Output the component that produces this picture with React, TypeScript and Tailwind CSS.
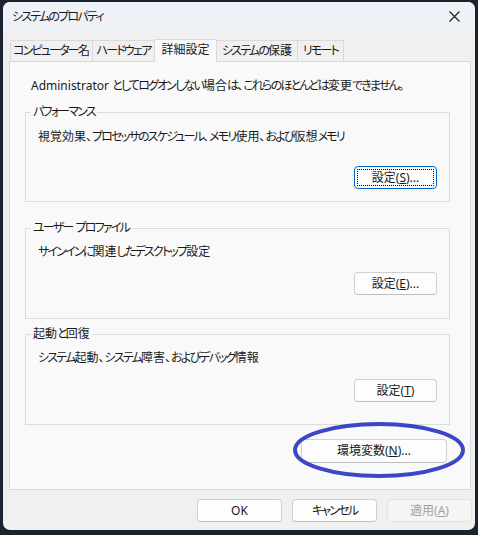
import type { ReactNode } from 'react'

const FONT = "font-['Noto_Sans','Noto_Sans_CJK_JP',sans-serif] [font-feature-settings:'palt']"

// kana runs are set tighter than kanji, like the system UI face
function Jp({ children }: { children: string }) {
  return (
    <>
      {children.split(/([\u3040-\u30ff]+)/).map((s, i) =>
        i % 2 ? (
          <span key={i} className="tracking-[-1.8px]">
            {s}
          </span>
        ) : (
          s
        ),
      )}
    </>
  )
}

export default function App() {
  return (
    <div className={`h-[535px] w-[478px] overflow-hidden bg-[#1c2330] pl-[3px] pt-[2px] text-[12px] leading-[16px] text-[#1a1a1a] ${FONT}`}>
      <div className="flex h-[528px] w-[472px] flex-col overflow-hidden rounded-[7px] bg-[#f0f0f0]">
        {/* title bar */}
        <div className="flex h-[29px] shrink-0 items-center justify-between bg-[#eef2f7] pl-[9px] pr-[6px]">
          <span>
            <Jp>システムのプロパティ</Jp>
          </span>
          <span className="grid h-[29px] w-[30px] place-items-center">
            <svg width="11" height="11" viewBox="0 0 11 11" stroke="#1a1a1a" strokeWidth="1.1">
              <path d="M0.5 0.5l10 10M10.5 0.5l-10 10" />
            </svg>
          </span>
        </div>

        {/* tabs */}
        <div className="ml-[7px] mt-[8px] flex h-[22px] items-end">
          <Tab w="w-[83px]">コンピューター名</Tab>
          <Tab w="w-[63px]">ハードウェア</Tab>
          <Tab w="w-[63px]" active>
            詳細設定
          </Tab>
          <Tab w="w-[82px]">システムの保護</Tab>
          <Tab w="w-[47px]">リモート</Tab>
        </div>

        <div className="ml-[6px] h-[429px] w-[462px] border border-[#d9d9d9] bg-[#f9f9f9] pt-[16px]">
          <p className="ml-[21px]">
            <Jp>Administrator としてログオンしない場合は、これらのほとんどは変更できません。</Jp>
          </p>

          <Group title="パフォーマンス" className="mt-[10px] h-[98px]">
            <p className="ml-[7px] mt-[9px]">
              <Jp>視覚効果、プロセッサのスケジュール、メモリ使用、および仮想メモリ</Jp>
            </p>
            <div className="mt-[21px] flex justify-end">
              <Btn focused>
                設定(<u>S</u>)...
              </Btn>
            </div>
          </Group>

          <Group title="ユーザー プロファイル" className="mt-[18px] h-[99px]">
            <p className="ml-[7px] mt-[8px]">
              <Jp>サインインに関連したデスクトップ設定</Jp>
            </p>
            <div className="mt-[12px] flex justify-end">
              <Btn>
                設定(<u>E</u>)...
              </Btn>
            </div>
          </Group>

          <Group title="起動と回復" className="mt-[7px] h-[99px]">
            <p className="ml-[7px] mt-[8px]">
              <Jp>システム起動、システム障害、およびデバッグ情報</Jp>
            </p>
            <div className="mt-[13px] flex justify-end">
              <Btn>
                設定(<u>T</u>)
              </Btn>
            </div>
          </Group>

          <div className="mr-[23px] mt-[14px] flex justify-end">
            <div className="relative">
              <Btn wide>
                環境変数(<u>N</u>)...
              </Btn>
              <svg className="pointer-events-none absolute left-[-9px] top-[-18px]" width="174" height="58" viewBox="0 0 174 58" fill="none">
                <ellipse cx="87" cy="29" rx="84" ry="26" stroke="#3c46c6" strokeWidth="4" />
              </svg>
            </div>
          </div>
        </div>

        {/* dialog buttons */}
        <div className="mr-[3px] mt-[9px] flex justify-end gap-[10px]">
          <Btn bottom>OK</Btn>
          <Btn bottom>
            <Jp>キャンセル</Jp>
          </Btn>
          <Btn bottom disabled>
            適用(<u>A</u>)
          </Btn>
        </div>
      </div>
    </div>
  )
}

function Tab({ children, w, active = false }: { children: string; w: string; active?: boolean }) {
  if (active)
    return (
      <div className={`relative z-10 -mb-px -ml-px flex h-[23px] justify-center border border-b-0 border-[#d9d9d9] bg-[#f9f9f9] pt-[2px] ${w}`}>
        <Jp>{children}</Jp>
      </div>
    )
  return (
    <div className={`-ml-px flex h-[21px] items-center justify-center whitespace-nowrap border border-b-0 border-[#d9d9d9] bg-[#f0f0f0] first:ml-0 ${w}`}>
      <span>
        <Jp>{children}</Jp>
      </span>
    </div>
  )
}

function Group({ title, className = '', children }: { title: string; className?: string; children: ReactNode }) {
  return (
    <fieldset className={`ml-[15px] w-[425px] border border-[#dcdcdc] pl-[5px] pr-[12px] ${className}`}>
      <legend className="px-[2px]">
        <Jp>{title}</Jp>
      </legend>
      {children}
    </fieldset>
  )
}

function Btn({
  children,
  focused = false,
  wide = false,
  bottom = false,
  disabled = false,
}: {
  children: ReactNode
  focused?: boolean
  wide?: boolean
  bottom?: boolean
  disabled?: boolean
}) {
  const size = wide ? 'w-[146px] h-[24px]' : bottom ? 'w-[85px] h-[23px]' : 'w-[83px] h-[23px]'
  const look = disabled
    ? 'border-[#e3e3e3] bg-[#f5f5f5] text-[#a0a0a0]'
    : focused
      ? 'border-[#0067c0] bg-[#fdfdfd] outline-1 outline-dotted outline-black outline-offset-[-4px]'
      : 'border-[#d0d0d0] border-b-[#bdbdbd] bg-[#fdfdfd]'
  return (
    <div className={`flex items-center justify-center rounded-[4px] border ${size} ${look}`}>
      <span>{children}</span>
    </div>
  )
}
